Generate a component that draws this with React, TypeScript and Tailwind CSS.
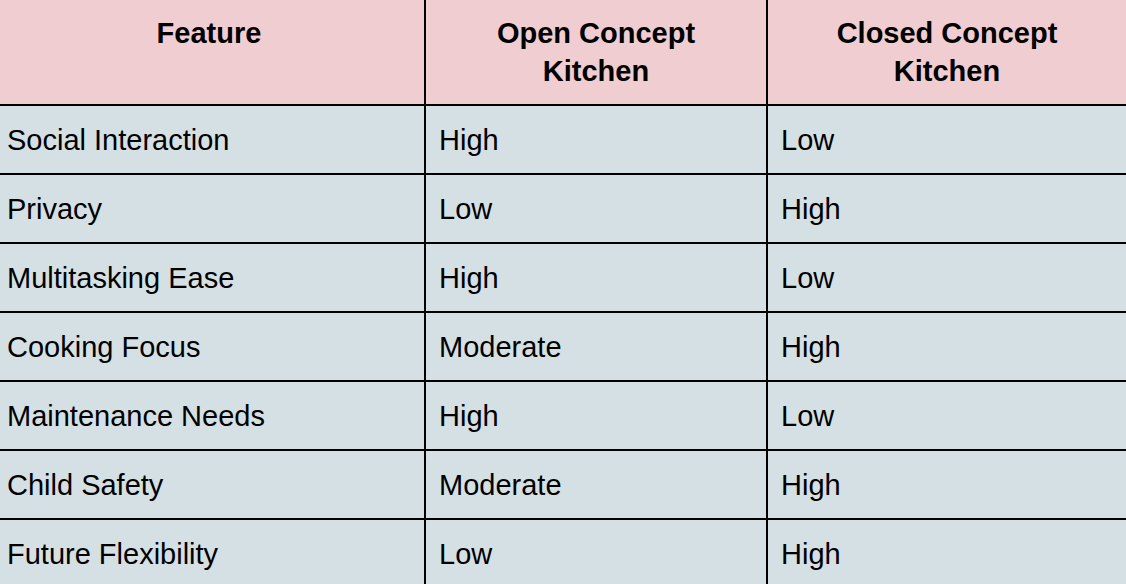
const rows = [
  ["Social Interaction", "High", "Low"],
  ["Privacy", "Low", "High"],
  ["Multitasking Ease", "High", "Low"],
  ["Cooking Focus", "Moderate", "High"],
  ["Maintenance Needs", "High", "Low"],
  ["Child Safety", "Moderate", "High"],
  ["Future Flexibility", "Low", "High"],
];

const headers = ["Feature", "Open Concept Kitchen", "Closed Concept Kitchen"];

export default function App() {
  return (
    <div
      className="h-[584px] w-[1126px] overflow-hidden bg-white text-black"
      style={{ fontFamily: '"Liberation Sans", Arial, sans-serif' }}
    >
      <div className="-ml-[6px] grid grid-cols-[430px_340px_358px] grid-rows-[104px_repeat(7,67px)] gap-[2px] bg-black">
        {headers.map((h) => (
          <div
            key={h}
            className="bg-[#efcdd0] px-[60px] pt-[14px] text-center text-[29px] font-bold leading-[38px]"
          >
            {h}
          </div>
        ))}
        {rows.map((r) =>
          r.map((cell, i) => (
            <div
              key={r[0] + i}
              className="flex items-center bg-[#d5e0e4] pl-[13px] pt-[2px] text-[29px] leading-none"
            >
              {cell}
            </div>
          ))
        )}
      </div>
    </div>
  );
}
